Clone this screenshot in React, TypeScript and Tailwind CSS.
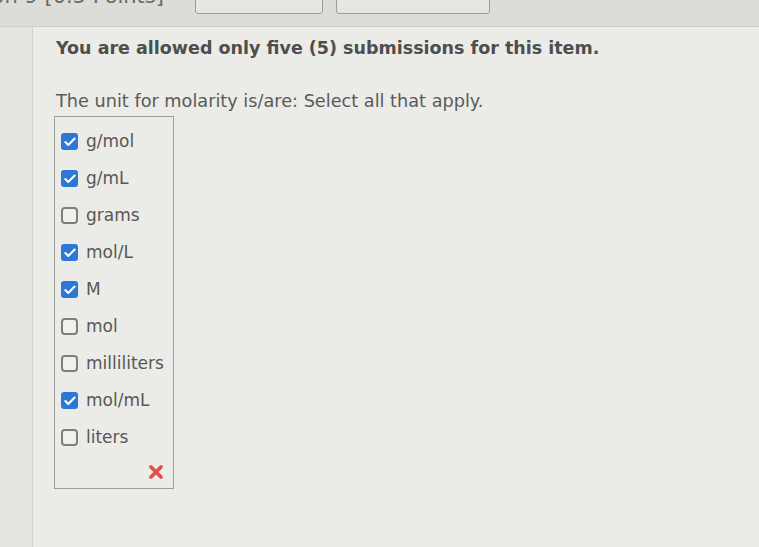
import { Check, X } from 'lucide-react';

const options = [
  { label: 'g/mol', checked: true },
  { label: 'g/mL', checked: true },
  { label: 'grams', checked: false },
  { label: 'mol/L', checked: true },
  { label: 'M', checked: true },
  { label: 'mol', checked: false },
  { label: 'milliliters', checked: false },
  { label: 'mol/mL', checked: true },
  { label: 'liters', checked: false },
];

function Box({ checked }: { checked: boolean }) {
  if (checked) {
    return (
      <span className="block shrink-0 w-[17px] h-[17px] rounded-[3px] bg-[#2d78d6] flex items-center justify-center">
        <Check className="w-[14px] h-[14px] text-white" strokeWidth={3.5} />
      </span>
    );
  }
  return <span className="block shrink-0 w-[17px] h-[17px] rounded-[4px] border-2 border-[#7e7e7c] bg-[#f0f0ee]" />;
}

export default function App() {
  return (
    <div
      className="w-[759px] h-[547px] overflow-hidden bg-[#e7e7e3] text-[#555553] flex flex-col"
      style={{ fontFamily: '"DejaVu Sans", Verdana, sans-serif' }}
    >
      {/* toolbar strip */}
      <div className="h-[27px] shrink-0 bg-[#dcdcd8] border-b border-[#cdcdc9] flex items-start">
        <div className="w-[195px] shrink-0 overflow-hidden flex justify-end pr-[31px]">
          <span className="block shrink-0 whitespace-nowrap -mt-[14px] text-[21px] leading-[20px] text-[#6a6a68]">
            Question 9 [0.5 Points]
          </span>
        </div>
        <div className="-mt-[4px] w-[128px] h-[18px] shrink-0 rounded-[3px] border-[1.5px] border-[#9c9c98] bg-[#e6e6e2]" />
        <div className="ml-[13px] -mt-[4px] w-[154px] h-[18px] shrink-0 rounded-[3px] border-[1.5px] border-[#9c9c98] bg-[#e6e6e2]" />
      </div>

      <div className="flex flex-1">
        <div className="w-[33px] shrink-0 border-r border-[#d4d4d0] bg-[#e4e4e0]" />
        <div className="pl-[23px] pt-[10px] flex-1 bg-[#ebebe8]">
          <h1 className="text-[17.5px] font-bold text-[#4e4e4c] leading-[22px] whitespace-nowrap">
            You are allowed only five (5) submissions for this item.
          </h1>
          <p className="mt-[31px] text-[17.7px] leading-[22px] text-[#5a5a58] whitespace-nowrap">
            The unit for molarity is/are: Select all that apply.
          </p>
          <div className="mt-[4px] -ml-[2px] w-[120px] h-[373px] border border-[#9e9e9a] pt-[14px] pl-[6px] flex flex-col">
            {options.map((o) => (
              <label key={o.label} className="h-[37px] flex items-start gap-[8px] text-[17px] leading-[20px] text-[#575755]">
                <span className="mt-[2px]">
                  <Box checked={o.checked} />
                </span>
                <span>{o.label}</span>
              </label>
            ))}
            <div className="flex justify-end pr-[7px] -mt-[2px]">
              <X className="w-[20px] h-[20px] text-[#e0524a]" strokeWidth={4.5} />
            </div>
          </div>
        </div>
      </div>
    </div>
  );
}
